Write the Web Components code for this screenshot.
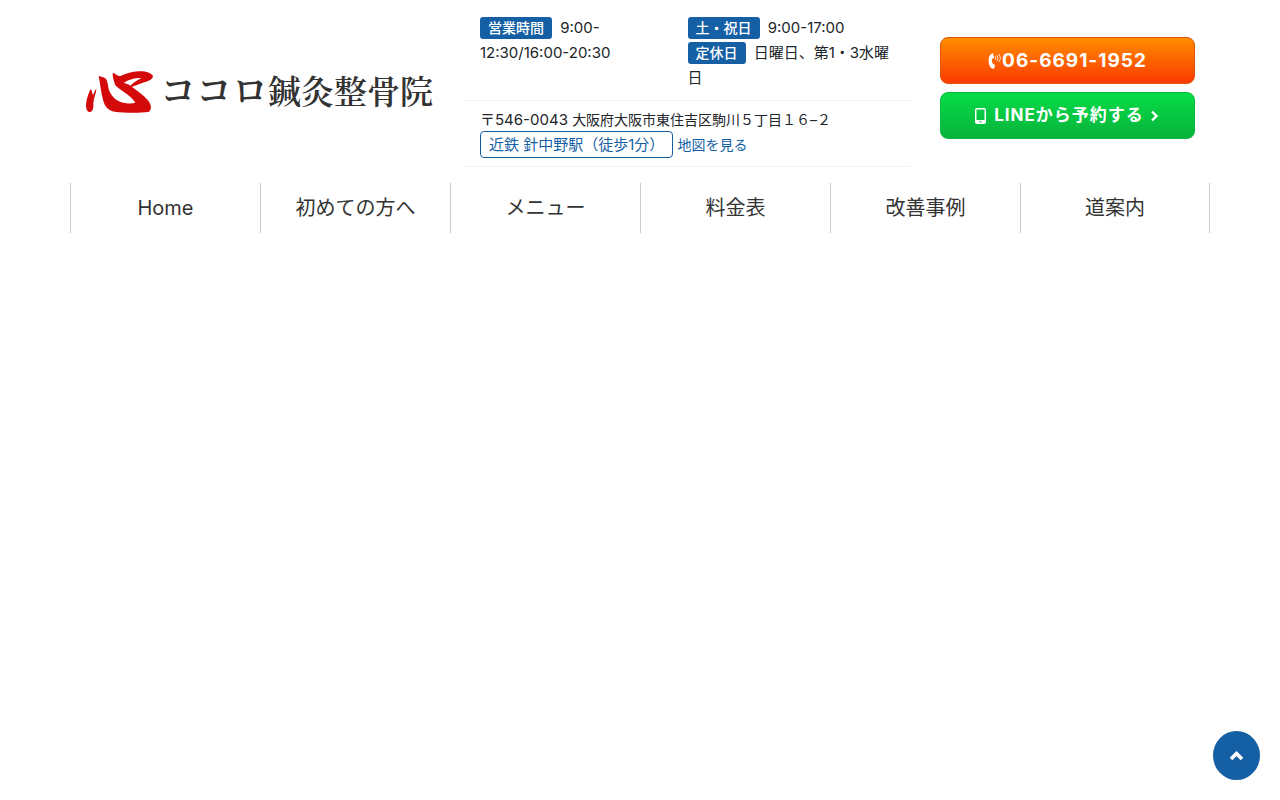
<!DOCTYPE html>
<html lang="ja">
<head>
<meta charset="utf-8">
<meta name="viewport" content="width=device-width, initial-scale=1">
<title>ココロ鍼灸整骨院</title>
<style>
body{margin:0;background:#fff;color:#212529;font:15px/25px Inter,"Noto Sans CJK JP",sans-serif;--blue:#155fa5}
</style>
</head>
<body>
<clinic-header></clinic-header>
<page-top></page-top>
<script>
const define=(name,html)=>{
  const t=document.createElement('template');
  t.innerHTML=html;
  customElements.define(name,class extends HTMLElement{
    constructor(){
      super();
      this.attachShadow({mode:'open'}).append(t.content.cloneNode(true));
    }
    connectedCallback(){
      const a=this.shadowRoot.querySelector('a');
      if(a&&this.hasAttribute('href'))a.href=this.getAttribute('href');
    }
  });
};

define('clinic-logo',`
<style>
:host{display:block}
a{display:flex;align-items:center;gap:6px;color:#333;text-decoration:none;white-space:nowrap}
svg{flex:none;width:69px;height:45px}
span{padding-bottom:4px;font:600 33px/44px "Noto Serif CJK JP","Noto Sans CJK JP",serif}
b{font-size:36px;font-weight:600}
</style>
<a href="#">
<svg viewBox="15 25 207 135" aria-hidden="true">
<path fill="#d40a0a" d="M31 86C27 96 18 118 18 134C18 148 24 156 31 154C39 152 41 142 40 128C40 114 49 98 49 85C46 84 43 97 39 103C36 99 37 88 31 86Z"/>
<path fill="#d40a0a" d="M56 45C63 50 71 47 76 53C84 60 83 78 88 91C94 104 104 117 122 124C138 129 155 130 166 126C158 114 147 105 136 97C125 89 112 81 106 74C104 66 98 56 98 37C106 36 108 46 121 46C138 39 156 33 176 32C196 31 214 36 219 46C218 56 207 61 193 65C178 70 166 75 156 79C172 91 191 104 205 120C214 131 216 146 207 153C180 158 132 157 104 153C84 150 75 138 70 121C63 96 61 72 56 45Z"/>
<path fill="#fff" d="M131 67C143 58 161 52 184 52C174 58 161 64 151 75C147 70 139 69 131 67Z"/>
</svg>
<span><b>ココロ</b>鍼灸整骨院</span>
</a>`);

define('info-label',`
<style>
:host{display:inline-block;height:22px;line-height:22px;padding:0 8px;margin-right:4px;border-radius:3px;background:var(--blue);color:#fff;font-size:14px;font-weight:500}
</style><slot></slot>`);

define('clinic-info',`
<style>
:host{display:block}
section{padding:0 15px 9px;border-bottom:1px solid #f1f1f1}
.hours{display:grid;grid-template-columns:1fr 1fr;padding-bottom:10px}
.place{padding-top:6px}
p{margin:0}
.address{font-size:14px}
.code{font-size:15px}
a{color:var(--blue);text-decoration:none}
.station{padding:3px 8px;border:1px solid;border-radius:4px}
.map{font-size:14px}
</style>
<section class="hours">
<p><info-label>営業時間</info-label> 9:00-<br>12:30/16:00-20:30</p>
<p><info-label>土・祝日</info-label> 9:00-17:00<br><info-label>定休日</info-label> 日曜日、第1・3水曜<br>日</p>
</section>
<section class="place">
<p class="address"><span class="code">〒546-0043 </span>大阪府大阪市東住吉区駒川５丁目１６–２</p>
<p><a class="station" href="#station">近鉄 針中野駅（徒歩1分）</a> <a class="map" href="#map">地図を見る</a></p>
</section>`);

define('cta-button',`
<style>
:host{display:block}
a{display:flex;align-items:center;justify-content:center;box-sizing:border-box;height:47px;border-radius:8px;border:1px solid var(--edge);background:linear-gradient(var(--from),var(--to));color:#fff;font-weight:700;letter-spacing:1px;text-decoration:none;white-space:nowrap}
</style>
<a href="#"><slot name="before"></slot><slot></slot><slot name="after"></slot></a>`);

define('nav-item',`
<style>
:host{display:block;border-left:1px solid #ccc}
:host(:last-child){border-right:1px solid #ccc}
a{display:block;color:#333;font-size:20px;line-height:50px;text-align:center;text-decoration:none}
</style><a href="#"><slot></slot></a>`);

define('main-nav',`
<style>
:host{display:block}
nav{display:grid;grid-template-columns:repeat(6,1fr)}
</style>
<nav>
<nav-item href="#home">Home</nav-item>
<nav-item href="#first">初めての方へ</nav-item>
<nav-item href="#menu">メニュー</nav-item>
<nav-item href="#price">料金表</nav-item>
<nav-item href="#case">改善事例</nav-item>
<nav-item href="#access">道案内</nav-item>
</nav>`);

define('clinic-header',`
<style>
:host{display:block;max-width:1140px;margin:0 auto;padding-top:15px}
header{display:grid;grid-template-columns:4fr 5fr 3fr;align-items:center;margin-bottom:16px}
header>*{margin:0 15px;min-width:0}
.cta{display:grid;gap:8px;padding-bottom:6px}
.tel{--from:#ff8c00;--to:#fb3a00;--edge:#e2560a;font-size:19px}
.line{--from:#06dc46;--to:#08b33c;--edge:#08bb3f;font-size:17px}
svg{display:block;fill:#fff}
</style>
<header>
<clinic-logo></clinic-logo>
<clinic-info></clinic-info>
<div class="cta">
<cta-button class="tel" href="tel:0666911952">
<svg slot="before" width="14" height="18" viewBox="0 0 14 18" aria-hidden="true"><path d="M5 1L2 3C0 7 0 12 3 16L6 17L7 13L5 12Q3 9 4 7L6 6Z"/><path d="M7 4Q9 6 7 8M9 3Q11 6 9 9M11 2Q14 6 11 10" fill="none" stroke="#fff" stroke-opacity=".75"/></svg>06-6691-1952</cta-button>
<cta-button class="line" href="#line">
<svg slot="before" width="19" height="18" viewBox="0 0 19 18" aria-hidden="true"><path fill-rule="evenodd" d="M2 1H9Q11 1 11 3V15Q11 17 9 17H2Q0 17 0 15V3Q0 1 2 1ZM1.5 2.5V13H9.5V2.5ZM4.5 14.2V15.6H6.5V14.2Z"/></svg>LINEから予約する<svg slot="after" width="16" height="18" viewBox="0 0 16 18" aria-hidden="true"><path d="M8 4.5L12.5 9L8 13.5" fill="none" stroke="#fff" stroke-width="2.4"/></svg></cta-button>
</div>
</header>
<main-nav></main-nav>`);

customElements.define('page-top',class extends HTMLElement{
  constructor(){
    super();
    this.attachShadow({mode:'open'}).innerHTML=`
<style>
:host{display:block;position:fixed;right:20px;bottom:20px}
button{display:grid;place-items:center;width:47px;height:49px;padding:0;border:0;border-radius:50%;background:var(--blue);cursor:pointer}
</style>
<button type="button" aria-label="ページの先頭へ"><svg width="15" height="12" viewBox="0 0 15 12" aria-hidden="true"><path d="M2 9L7.5 3.5L13 9" fill="none" stroke="#fff" stroke-width="3.6"/></svg></button>`;
    this.shadowRoot.querySelector('button').onclick=()=>scrollTo({top:0,behavior:'smooth'});
  }
});
</script>
</body>
</html>
